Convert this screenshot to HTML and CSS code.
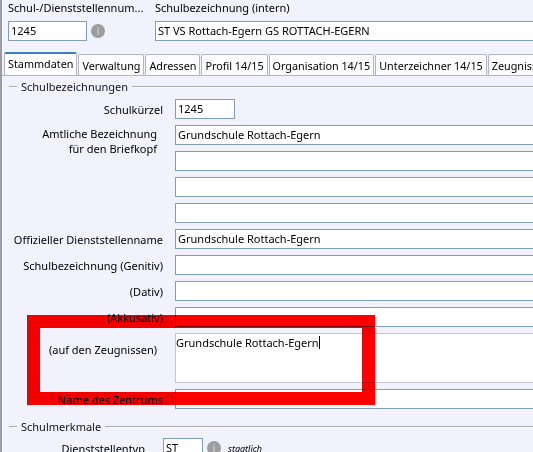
FILE: index.html
```html
<!DOCTYPE html>
<html lang="de">
<head>
<meta charset="utf-8">
<title>Stammdaten</title>
<link rel="stylesheet" href="styles.css">
</head>
<body>
<div class="app">
  <header class="top">
    <div class="field nr">
      <div class="toplbl">Schul-/Dienststellennum...</div>
      <div class="inrow">
        <div class="box w79">1245</div>
        <span class="info">i</span>
      </div>
    </div>
    <div class="field name">
      <div class="toplbl">Schulbezeichnung (intern)</div>
      <div class="box">ST VS Rottach-Egern GS ROTTACH-EGERN</div>
    </div>
  </header>

  <nav class="tabs">
    <span class="tab sel">Stammdaten</span>
    <span class="tab">Verwaltung</span>
    <span class="tab">Adressen</span>
    <span class="tab">Profil 14/15</span>
    <span class="tab">Organisation 14/15</span>
    <span class="tab">Unterzeichner 14/15</span>
    <span class="tab">Zeugnisse</span>
  </nav>

  <section class="panel">
    <div class="legend"><span class="legtxt">Schulbezeichnungen</span></div>
    <div class="form">
      <div class="lbl">Schulkürzel</div>
      <div class="box c2 w60">1245</div>

      <div class="lbl multi span4">Amtliche Bezeichnung<br>für den Briefkopf</div>
      <div class="box c2">Grundschule Rottach-Egern</div>
      <div class="box c2"></div>
      <div class="box c2"></div>
      <div class="box c2"></div>

      <div class="lbl">Offizieller Dienststellenname</div>
      <div class="box c2">Grundschule Rottach-Egern</div>

      <div class="lbl">Schulbezeichnung (Genitiv)</div>
      <div class="box c2"></div>

      <div class="lbl">(Dativ)</div>
      <div class="box c2"></div>

      <div class="lbl">(Akkusativ)</div>
      <div class="box c2"></div>

      <div class="lbl multi area-lbl">(auf den Zeugnissen)</div>
      <div class="box c2 area">Grundschule Rottach-Egern<span class="caret"></span></div>

      <div class="lbl">Name des Zentrums</div>
      <div class="box c2"></div>
    </div>

    <div class="legend second"><span class="legtxt">Schulmerkmale</span></div>
    <div class="form2">
      <div class="lbl">Dienststellentyp</div>
      <div class="inrow">
        <div class="box w40">ST</div>
        <span class="info">i</span>
        <span class="note">staatlich</span>
      </div>
    </div>
  </section>

  <div class="highlight"></div>
</div>
</body>
</html>
```

FILE: styles.css
```css
html, body {
  margin: 0;
  padding: 0;
  overflow: hidden;
  background: #f2f2fc;
}

body {
  font-family: "Noto Sans", "Open Sans", sans-serif;
  font-size: 11px;
  color: #000;
}

.app {
  position: relative;
  width: 760px;
  height: 452px;
  border-left: 2px solid #9c9ca6;
  box-sizing: border-box;
}

/* header */
.top {
  display: flex;
  padding: 1px 0 0 6px;
}

.field {
  display: flex;
  flex-direction: column;
  gap: 6px;
}

.field.nr {
  width: 147px;
}

.field.name {
  flex: 1;
}

.toplbl {
  line-height: 14px;
  height: 14px;
  white-space: nowrap;
}

.inrow {
  display: flex;
  align-items: center;
  gap: 4px;
}

.box {
  height: 20px;
  box-sizing: border-box;
  border: 1px solid #7f9db9;
  background: #fff;
  padding: 0 0 0 2px;
  line-height: 18px;
  white-space: nowrap;
  overflow: hidden;
}

.w79 { width: 79px; }
.w60 { width: 60px; }
.w40 { width: 40px; }

.info {
  width: 14px;
  height: 14px;
  border-radius: 50%;
  background: #9d9d9d;
  color: #c4c4c4;
  font-size: 10px;
  font-weight: bold;
  line-height: 14px;
  text-align: center;
  flex: none;
}

/* tabs */
.tabs {
  display: flex;
  align-items: flex-end;
  gap: 1px;
  margin: 11px 0 0 2px;
  height: 23px;
}

.tab {
  box-sizing: border-box;
  height: 21px;
  padding: 3px 3px 0 3px;
  line-height: 15px;
  font-size: 10.8px;
  border: 1px solid #b4b4c0;
  border-bottom: none;
  border-radius: 2px 2px 0 0;
  background: #fdfdff;
  white-space: nowrap;
}

.tab.sel {
  height: 23px;
  padding-top: 2px;
  border-top: 2px solid #3d82c4;
  background: #fff;
}

/* panel */
.panel {
  border-top: 1px solid #b4b4c0;
  padding-top: 4px;
}

.legend {
  display: flex;
  align-items: center;
  gap: 4px;
  height: 14px;
  line-height: 14px;
  padding-left: 7px;
}

.legend::before {
  content: "";
  width: 8px;
  border-top: 1px solid #a8a8b0;
  border-bottom: 1px solid #fff;
}

.legend::after {
  content: "";
  flex: 1;
  border-top: 1px solid #a8a8b0;
  border-bottom: 1px solid #fff;
}

.legtxt {
  color: #101020;
}

.legend.second {
  margin-top: 11px;
}

.form {
  display: grid;
  grid-template-columns: 161px 1fr;
  column-gap: 12px;
  row-gap: 6px;
  grid-auto-rows: minmax(20px, auto);
  margin-top: 5px;
}

.lbl {
  text-align: right;
  align-self: center;
  line-height: 15px;
  white-space: nowrap;
}

.lbl.multi {
  align-self: start;
  padding-right: 6px;
}

.span4 {
  grid-row: span 4;
  padding-top: 1px;
}

.c2 {
  grid-column: 2;
}

.area {
  height: 50px;
  border-color: #c6c6d4;
  line-height: 15px;
  padding-top: 1px;
  padding-left: 0;
}

.area-lbl {
  padding-top: 9px;
}

.caret {
  display: inline-block;
  width: 0;
  height: 13px;
  border-right: 1px solid #000;
  vertical-align: -2px;
}

.form2 {
  display: grid;
  grid-template-columns: 143px 1fr;
  column-gap: 18px;
  margin-top: 4px;
}

.note {
  font-style: italic;
  font-size: 9px;
  margin-left: 3px;
}

/* red highlight annotation */
.highlight {
  position: absolute;
  left: 25px;
  top: 315px;
  width: 348px;
  height: 90px;
  box-sizing: border-box;
  border: 13px solid #ff0000;
  mix-blend-mode: multiply;
  pointer-events: none;
}
```
